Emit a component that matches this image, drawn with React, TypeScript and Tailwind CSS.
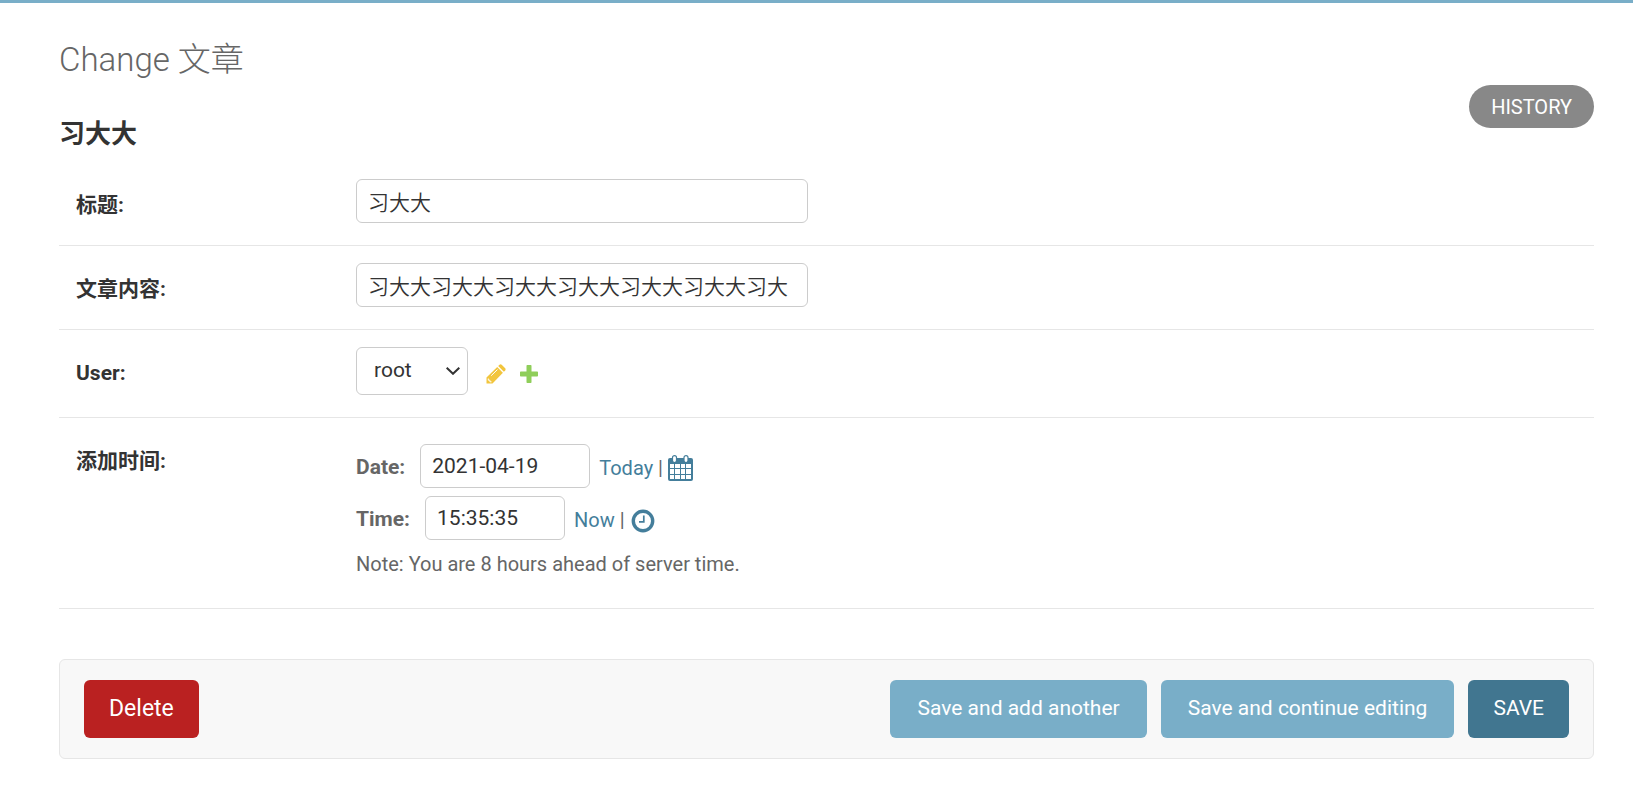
import type { ReactNode } from 'react'

const inputStyles = 'h-11 rounded-md border border-[#ccc] bg-white px-[11px] text-[21px] text-[#333]'
const submitStyles = 'h-[58px] rounded-md text-white'
const timeLabelStyles = 'pt-1 text-[21px] font-bold'
const shortcutStyles = 'ml-[9px] flex items-center gap-[5px] pt-1'

function FormRow({ label, htmlFor, children }: { label: string; htmlFor: string; children: ReactNode }) {
  return (
    <div className="flex border-b border-[#e6e6e6] px-[17px] pt-[17px] pb-[22px]">
      <label htmlFor={htmlFor} className="w-[280px] shrink-0 pt-[11px] text-[21px] leading-[30px] font-bold text-[#333]">
        {label}
      </label>
      {children}
    </div>
  )
}

function PencilIcon() {
  return (
    <svg viewBox="0 0 20 20" className="size-5" aria-hidden="true">
      <path fill="#f2c53d" d="M.5 19.500v-6L11.200 3l5.700 5.700L6.500 19.500z" />
      <path fill="#f2c53d" d="m12.200 2.100 1.300-1.300q1.100-.9 2.200 0l3.500 3.400q.9 1.100 0 2.200l-1.300 1.300z" />
      <path fill="none" stroke="#fff" strokeWidth="1" d="M5.200 11.700 11.500 5.500M2.300 14.500v1.700h1.600v1.600h1.600" />
    </svg>
  )
}

function PlusIcon() {
  return (
    <svg viewBox="0 0 18 18" className="size-[18px]" aria-hidden="true">
      <path
        fill="#8fce5a"
        d="M7.300 0h3.400q.8 0 .8.800v5.700h5.700q.8 0 .8.800v3.400q0 .8-.8.800h-5.700v5.700q0 .8-.8.800H7.300q-.8 0-.8-.8v-5.700H.8q-.8 0-.8-.8V7.300q0-.8.8-.8h5.700V.8q0-.8.8-.8z"
      />
    </svg>
  )
}

function CalendarIcon() {
  return (
    <svg viewBox="0 0 25 26" className="h-[26px] w-[25px]" aria-hidden="true">
      <rect y="3" width="25" height="23" rx="2" fill="#447e9b" />
      <rect x="4.500" y=".6" width="4" height="7" rx="2" fill="#fff" stroke="#447e9b" strokeWidth="1.200" />
      <rect x="16" y=".6" width="4" height="7" rx="2" fill="#fff" stroke="#447e9b" strokeWidth="1.200" />
      <path
        fill="#fff"
        d="M2 9h4v4H2zM7 9h5v4H7zM13 9h4v4h-4zM18 9h5v4h-5zM2 14h4v5H2zM7 14h5v5H7zM13 14h4v5h-4zM18 14h5v5h-5zM2 20h4v4H2zM7 20h5v4H7zM13 20h4v4h-4zM18 20h5v4h-5z"
      />
    </svg>
  )
}

function ClockIcon() {
  return (
    <svg viewBox="0 0 25 26" className="h-[26px] w-[25px]" fill="none" stroke="#447e9b" aria-hidden="true">
      <circle cx="13" cy="14" r="9.700" strokeWidth="3.400" />
      <path strokeWidth="1.700" d="M13.800 8.500v6.300H9" />
    </svg>
  )
}

export default function App() {
  return (
    <div className="border-t-[3px] border-[#79aec8] bg-white pr-[39px] pb-8 pl-[59px] font-['Roboto','Noto_Sans_CJK_SC',sans-serif] text-[#333]">
      <h1 className="pt-[37px] text-[33px] leading-10 font-light text-[#666]">Change 文章</h1>
      <div className="flex items-start justify-between pt-[5px]">
        <h2 className="pt-[29px] text-[26px] leading-10 font-bold">习大大</h2>
        <a href="#history" className="flex h-[43px] items-center rounded-full bg-[#888] px-[22px] text-[20px] text-white">
          HISTORY
        </a>
      </div>

      <form className="pt-2" onSubmit={e => e.preventDefault()}>
        <FormRow label="标题:" htmlFor="title">
          <input id="title" type="text" defaultValue="习大大" className={`${inputStyles} w-[452px] font-[350]`} />
        </FormRow>
        <FormRow label="文章内容:" htmlFor="content">
          <input
            id="content"
            type="text"
            defaultValue="习大大习大大习大大习大大习大大习大大习大"
            className={`${inputStyles} w-[452px] font-[350]`}
          />
        </FormRow>
        <FormRow label="User:" htmlFor="user">
          <div className="flex items-center">
            <div className="grid items-center">
              <select
                id="user"
                className="col-start-1 row-start-1 h-12 w-28 appearance-none rounded-md border border-[#ccc] bg-white pl-[17px] text-[21px] text-[#333]"
              >
                <option>root</option>
              </select>
              <svg viewBox="0 0 14 8" className="pointer-events-none col-start-1 row-start-1 mr-2 h-2 w-3.5 justify-self-end" aria-hidden="true">
                <path fill="none" stroke="#333" strokeWidth="2" d="m.7.8 6.300 6 6.300-6" />
              </svg>
            </div>
            <a href="#change-user" aria-label="Change user" className="ml-[18px] pt-1.5">
              <PencilIcon />
            </a>
            <a href="#add-user" aria-label="Add user" className="ml-3.5 pt-1.5">
              <PlusIcon />
            </a>
          </div>
        </FormRow>
        <FormRow label="添加时间:" htmlFor="date">
          <div className="pt-[9px] pb-2 text-[20px] text-[#666]">
            <div className="flex items-center">
              <label htmlFor="date" className={timeLabelStyles}>
                Date:
              </label>
              <input id="date" type="text" defaultValue="2021-04-19" className={`${inputStyles} ml-[15px] w-[170px]`} />
              <div className={shortcutStyles}>
                <a href="#today" className="text-[#447e9b]">
                  Today
                </a>
                <span>|</span>
                <a href="#calendar" aria-label="Choose a date">
                  <CalendarIcon />
                </a>
              </div>
            </div>
            <div className="flex items-center pt-2">
              <label htmlFor="time" className={timeLabelStyles}>
                Time:
              </label>
              <input id="time" type="text" defaultValue="15:35:35" className={`${inputStyles} ml-[15px] w-[140px]`} />
              <div className={shortcutStyles}>
                <a href="#now" className="text-[#447e9b]">
                  Now
                </a>
                <span>|</span>
                <a href="#clock" aria-label="Choose a time">
                  <ClockIcon />
                </a>
              </div>
            </div>
            <p className="pt-2.5 leading-[28px]">Note: You are 8 hours ahead of server time.</p>
          </div>
        </FormRow>

        <div className="mt-[50px] flex items-center gap-3.5 rounded-md border border-[#e6e6e6] bg-[#f8f8f8] px-6 py-5">
          <button type="button" className={`${submitStyles} mr-auto bg-[#ba2121] px-[25px] text-[23px]`}>
            Delete
          </button>
          <button type="submit" className={`${submitStyles} bg-[#79aec8] px-[27px] text-[21px]`}>
            Save and add another
          </button>
          <button type="submit" className={`${submitStyles} bg-[#79aec8] px-[27px] text-[21px]`}>
            Save and continue editing
          </button>
          <button type="submit" className={`${submitStyles} bg-[#417690] px-[25px] text-[21px]`}>
            SAVE
          </button>
        </div>
      </form>
    </div>
  )
}
